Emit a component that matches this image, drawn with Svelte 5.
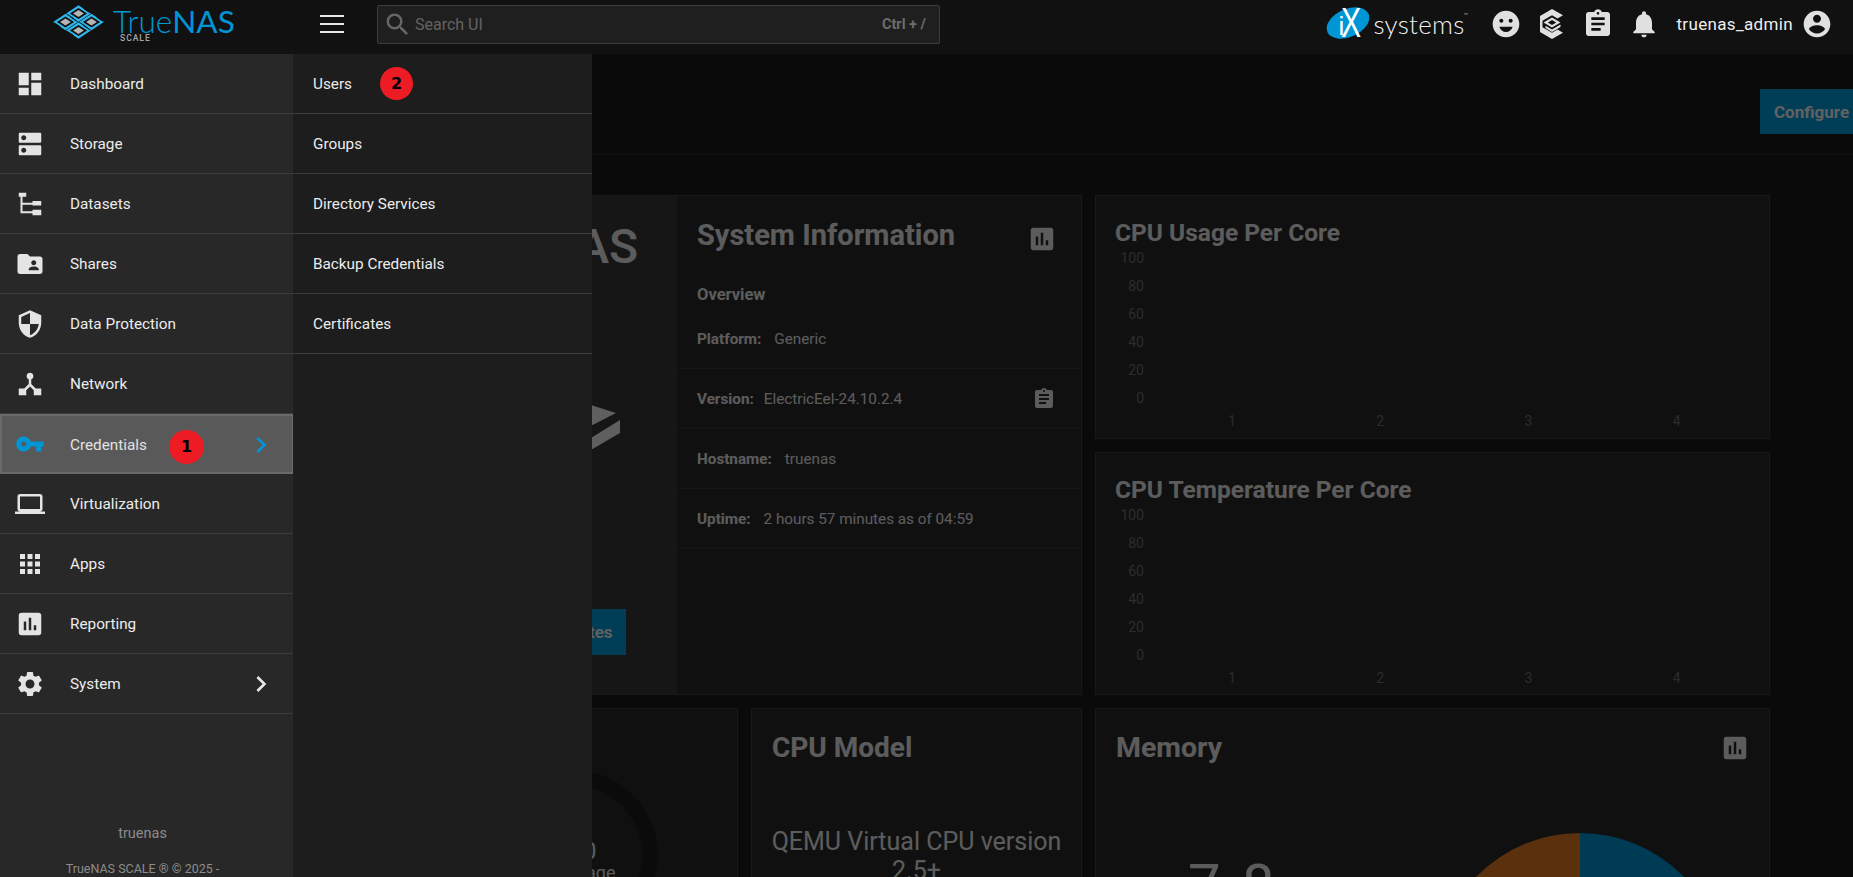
<script>
  const icons = {
    dashboard: 'M3 13h8V3H3v10zm0 8h8v-6H3v6zm10 0h8V11h-8v10zm0-18v6h8V3h-8z',
    storage: 'M20 13H4c-.55 0-1 .45-1 1v6c0 .55.45 1 1 1h16c.55 0 1-.45 1-1v-6c0-.55-.45-1-1-1zM7 19c-1.1 0-2-.9-2-2s.9-2 2-2 2 .9 2 2-.9 2-2 2zM20 3H4c-.55 0-1 .45-1 1v6c0 .55.45 1 1 1h16c.55 0 1-.45 1-1V4c0-.55-.45-1-1-1zM7 9c-1.1 0-2-.9-2-2s.9-2 2-2 2 .9 2 2-.9 2-2 2z',
    datasets: 'M3 3h6v3.2H6V11h8V9.6h7v3.6h-7V12.6H6v5.2h8v-1.2h7V21h-7v-1.6H4.4V6.2H3z',
    shares: 'M20 6h-8l-2-2H4c-1.1 0-1.99.9-1.99 2L2 18c0 1.1.9 2 2 2h16c1.1 0 2-.9 2-2V8c0-1.1-.9-2-2-2zm-5 3c1.1 0 2 .9 2 2s-.9 2-2 2-2-.9-2-2 .9-2 2-2zm4 8h-8v-1c0-1.33 2.67-2 4-2s4 .67 4 2v1z',
    shield: 'M12 1L3 5v6c0 5.55 3.84 10.74 9 12 5.16-1.26 9-6.45 9-12V5l-9-4zm0 10.99h7c-.53 4.12-3.28 7.79-7 8.94V12H5V6.3l7-3.11v8.8z',
    network: 'M12 3a2.7 2.7 0 0 1 1 5.2V12l3.6 3.6H21V21h-6v-4l-3-3-3 3v4H3v-5.4h4.4L11 12V8.2A2.7 2.7 0 0 1 12 3z',
    key: 'M12.65 10C11.83 7.67 9.61 6 7 6c-3.31 0-6 2.69-6 6s2.69 6 6 6c2.61 0 4.83-1.67 5.65-4H17v4h4v-4h2v-4H12.65zM7 14c-1.1 0-2-.9-2-2s.9-2 2-2 2 .9 2 2-.9 2-2 2z',
    laptop: 'M20 18c1.1 0 1.99-.9 1.99-2L22 6c0-1.1-.9-2-2-2H4c-1.1 0-2 .9-2 2v10c0 1.1.9 2 2 2H0v2h24v-2h-4zM4 6h16v10H4V6z',
    apps: 'M4 8h4V4H4v4zm6 12h4v-4h-4v4zm-6 0h4v-4H4v4zm0-6h4v-4H4v4zm6 0h4v-4h-4v4zm6-10v4h4V4h-4zm-6 4h4V4h-4v4zm6 6h4v-4h-4v4zm0 6h4v-4h-4v4z',
    assessment: 'M19 3H5c-1.1 0-2 .9-2 2v14c0 1.1.9 2 2 2h14c1.1 0 2-.9 2-2V5c0-1.1-.9-2-2-2zM9 17H7v-7h2v7zm4 0h-2V7h2v10zm4 0h-2v-4h2v4z',
    settings: 'M19.14 12.94c.04-.3.06-.61.06-.94 0-.32-.02-.64-.07-.94l2.03-1.58c.18-.14.23-.41.12-.61l-1.92-3.32c-.12-.22-.37-.29-.59-.22l-2.39.96c-.5-.38-1.03-.7-1.62-.94l-.36-2.54c-.04-.24-.24-.41-.48-.41h-3.84c-.24 0-.43.17-.47.41l-.36 2.54c-.59.24-1.13.57-1.62.94l-2.39-.96c-.22-.08-.47 0-.59.22L2.74 8.87c-.12.21-.08.47.12.61l2.03 1.58c-.05.3-.09.63-.09.94s.02.64.07.94l-2.03 1.58c-.18.14-.23.41-.12.61l1.92 3.32c.12.22.37.29.59.22l2.39-.96c.5.38 1.03.7 1.62.94l.36 2.54c.05.24.24.41.48.41h3.84c.24 0 .44-.17.47-.41l.36-2.54c.59-.24 1.13-.56 1.62-.94l2.39.96c.22.08.47 0 .59-.22l1.92-3.32c.12-.22.07-.47-.12-.61l-2.01-1.58zM12 15.6c-1.98 0-3.6-1.62-3.6-3.6s1.62-3.6 3.6-3.6 3.6 1.62 3.6 3.6-1.62 3.6-3.6 3.6z',
    chevron: 'M10 6L8.59 7.41 13.17 12l-4.58 4.59L10 18l6-6z',
    mood: 'M11.99 2C6.47 2 2 6.48 2 12s4.47 10 9.99 10C17.52 22 22 17.52 22 12S17.52 2 11.99 2zM8.5 8c.83 0 1.5.67 1.5 1.5S9.33 11 8.5 11 7 10.33 7 9.5 7.67 8 8.5 8zM12 18c-2.28 0-4.22-1.66-5-4h10c-.78 2.34-2.72 4-5 4zm3.5-7c-.83 0-1.5-.67-1.5-1.5S14.67 8 15.5 8s1.5.67 1.5 1.5-.67 1.5-1.5 1.5z',
    assignment: 'M19 3h-4.18C14.4 1.84 13.3 1 12 1c-1.3 0-2.4.84-2.82 2H5c-1.1 0-2 .9-2 2v14c0 1.1.9 2 2 2h14c1.1 0 2-.9 2-2V5c0-1.1-.9-2-2-2zm-7 0c.55 0 1 .45 1 1s-.45 1-1 1-1-.45-1-1 .45-1 1-1zm2 14H7v-2h7v2zm3-4H7v-2h10v2zm0-4H7V7h10v2z',
    bell: 'M12 22c1.1 0 2-.9 2-2h-4c0 1.1.89 2 2 2zm6-6v-5c0-3.07-1.64-5.64-4.5-6.32V4c0-.83-.67-1.5-1.5-1.5s-1.5.67-1.5 1.5v.68C7.63 5.36 6 7.92 6 11v5l-2 2v1h16v-1l-2-2z',
    account: 'M12 2C6.48 2 2 6.48 2 12s4.48 10 10 10 10-4.48 10-10S17.52 2 12 2zm0 3c1.66 0 3 1.34 3 3s-1.34 3-3 3-3-1.34-3-3 1.34-3 3-3zm0 14.2c-2.5 0-4.71-1.28-6-3.22.03-1.99 4-3.08 6-3.08 1.99 0 5.97 1.09 6 3.08-1.29 1.94-3.5 3.22-6 3.22z',
    search: 'M15.5 14h-.79l-.28-.27C15.41 12.59 16 11.11 16 9.5 16 5.91 13.09 3 9.5 3S3 5.91 3 9.5 5.91 16 9.5 16c1.61 0 3.09-.59 4.23-1.57l.27.28v.79l5 4.99L20.49 19l-4.99-5zm-6 0C7.01 14 5 11.99 5 9.5S7.01 5 9.5 5 14 7.01 14 9.5 11.99 14 9.5 14z',
  };

  const menu = [
    { label: 'Dashboard', icon: 'dashboard' },
    { label: 'Storage', icon: 'storage' },
    { label: 'Datasets', icon: 'datasets' },
    { label: 'Shares', icon: 'shares' },
    { label: 'Data Protection', icon: 'shield' },
    { label: 'Network', icon: 'network' },
    { label: 'Credentials', icon: 'key', active: true, arrow: true, badge: '1' },
    { label: 'Virtualization', icon: 'laptop' },
    { label: 'Apps', icon: 'apps' },
    { label: 'Reporting', icon: 'assessment' },
    { label: 'System', icon: 'settings', arrow: true },
  ];
  const submenu = ['Users', 'Groups', 'Directory Services', 'Backup Credentials', 'Certificates'];

  const info = [
    { k: 'Platform:', v: 'Generic' },
    { k: 'Version:', v: 'ElectricEel-24.10.2.4', copy: true },
    { k: 'Hostname:', v: 'truenas' },
    { k: 'Uptime:', v: '2 hours 57 minutes as of 04:59' },
  ];

  const charts = ['CPU Usage Per Core', 'CPU Temperature Per Core'];
  const ticks = [100, 80, 60, 40, 20, 0];
  const cores = [1, 2, 3, 4];

  // isometric cells of the TrueNAS mark
  const cells = [[78.5, 13.5], [65.5, 22], [91.5, 22], [78.5, 30.5]];
  const dia = (c, a, b) => `${c[0]},${c[1] - b} ${c[0] + a},${c[1]} ${c[0]},${c[1] + b} ${c[0] - a},${c[1]}`;
</script>

<div class="shell">
  <header class="topbar">
    <div class="brand">
      <svg class="mark" viewBox="50 2 56 40" aria-hidden="true">
        {#each cells as c}
          <polygon points={dia(c, 12.4, 8.2)} fill="#2fb6ea" />
          <polygon points={dia(c, 8.6, 5.6)} fill="#111" />
          <polygon points={dia(c, 5.4, 3.5)} fill="#b5b5b5" />
          <line x1={c[0] - 11} y1={c[1] + 1} x2={c[0] - 5} y2={c[1] + 5} stroke="#111" stroke-width="1" />
          <line x1={c[0] + 11} y1={c[1] - 1} x2={c[0] + 5} y2={c[1] - 5} stroke="#111" stroke-width="1" />
        {/each}
      </svg>
      <div class="word">
        <span class="tn"><span class="true">True</span><span class="nas">NAS</span></span>
        <span class="scale">SCALE</span>
      </div>
    </div>
    <button class="burger" aria-label="Menu"><i></i><i></i><i></i></button>
    <div class="search">
      <svg class="search-ic" viewBox="2.5 2.5 18 18"><path d={icons.search} /></svg>
      <span class="ph">Search UI</span>
      <span class="kbd">Ctrl + /</span>
    </div>
    <div class="right">
      <div class="ix">
        <svg class="ix-oval" viewBox="0 0 44 32" aria-hidden="true">
          <ellipse cx="21" cy="16" rx="22.5" ry="14" transform="rotate(-24 21 16)" fill="#0095d5" />
        </svg>
        <span class="ix-i">i</span><span class="ix-x">X</span>
        <span class="ix-s">systems</span><span class="tm">™</span>
      </div>
      <svg class="tool" viewBox="0 0 24 24"><path d={icons.mood} /></svg>
      <svg class="tool tc" viewBox="0 0 26 30" aria-hidden="true">
        <path fill-rule="evenodd" d="M13 0l11 6.2-5.5 3.3L13 6.3 3.5 11.8v6.4L13 23.7l5.5-3.2 5.5 3.2L13 30 1 23V7z" />
        <path fill-rule="evenodd" d="M13 8.5l8.5 5L13 18.6 4.5 13.5zM13 11l-4.2 2.5L13 16l4.2-2.5z" />
        <path d="M21.5 15.5v2.4L13 23l-6.5-3.9v-2.3L13 20.6z" />
      </svg>
      <svg class="tool" viewBox="0 0 24 24"><path d={icons.assignment} /></svg>
      <svg class="tool" viewBox="0 0 24 24"><path d={icons.bell} /></svg>
      <span class="user">truenas_admin</span>
      <svg class="tool acc" viewBox="0 0 24 24"><path d={icons.account} /></svg>
    </div>
  </header>

  <div class="stage">
    <main class="page">
      <div class="page-head">
        <button class="configure">Configure</button>
      </div>
      <div class="dash">
        <div class="col">
          <section class="card sys">
            <div class="sys-left">
              <div class="sys-name">TrueNAS</div>
              <svg class="sys-logo" viewBox="0 0 240 50" aria-hidden="true">
                <polygon points="128,0 150,0 194,14 170.5,26 150,16 128,14" />
                <polygon points="198,21 198,34 170.5,50 120,50 120,38 170.5,38" />
              </svg>
              <button class="updates">Check for Updates</button>
            </div>
            <div class="sys-right">
              <div class="sys-head">
                <h2>System Information</h2>
                <svg class="ic-muted" viewBox="0 0 24 24"><path d={icons.assessment} /></svg>
              </div>
              <div class="overview">Overview</div>
              {#each info as row}
                <div class="row">
                  <b class:tight={row.copy}>{row.k}</b><span>{row.v}</span>
                  {#if row.copy}
                    <svg class="ic-copy" viewBox="0 0 24 24"><path d={icons.assignment} /></svg>
                  {/if}
                </div>
              {/each}
            </div>
          </section>
          <div class="pair">
            <section class="card cpu">
              <svg class="gauge" viewBox="0 0 332 180" aria-hidden="true">
                <circle cx="166" cy="146" r="77" fill="none" stroke="#000" stroke-opacity=".3" stroke-width="16" />
                <text x="166" y="129" text-anchor="middle" class="g-a">0.5 %</text>
                <text x="166" y="150" text-anchor="middle" class="g-b">0.50</text>
                <text x="166" y="170" text-anchor="middle" class="g-c">Avg Usage</text>
              </svg>
            </section>
            <section class="card model">
              <h2>CPU Model</h2>
              <p>QEMU Virtual CPU version 2.5+</p>
            </section>
          </div>
        </div>
        <div class="col">
          {#each charts as title}
            <section class="card chart">
              <h3>{title}</h3>
              <svg class="plot" viewBox="0 0 675 190" aria-hidden="true">
                {#each ticks as t, i}
                  <line x1="62" x2="655" y1={6 + i * 28} y2={6 + i * 28} class="grid" />
                  <text x="48" y={11 + i * 28} text-anchor="end" class="tick">{t}</text>
                {/each}
                {#each [0, 1, 2, 3, 4] as n}
                  <line x1={62 + n * 148.25} x2={62 + n * 148.25} y1="6" y2="155" class="grid" />
                {/each}
                {#each cores as c, i}
                  <text x={136 + i * 148.2} y="174" text-anchor="middle" class="tick">{c}</text>
                {/each}
              </svg>
            </section>
          {/each}
          <section class="card memory">
            <div class="sys-head">
              <h2>Memory</h2>
              <svg class="ic-muted" viewBox="0 0 24 24"><path d={icons.assessment} /></svg>
            </div>
            <div class="mem-num">7.8</div>
            <svg class="pie" viewBox="0 0 290 290" aria-hidden="true">
              <path d="M145 145V0A145 145 0 0 1 290 145z" fill="#0095d5" />
              <path d="M145 145V0A145 145 0 0 0 0 145z" fill="#e07a1f" />
            </svg>
          </section>
        </div>
      </div>
    </main>

    <div class="backdrop"></div>

    <nav class="nav">
      <div class="side">
        <ul>
          {#each menu as m}
            <li class:active={m.active}>
              <svg class="ni" viewBox="0 0 24 24"><path d={icons[m.icon]} /></svg>
              <span>{m.label}</span>
              {#if m.badge}<em class="badge one">{m.badge}</em>{/if}
              {#if m.arrow}
                <svg class="arrow" viewBox="0 0 24 24"><path d={icons.chevron} /></svg>
              {/if}
            </li>
          {/each}
        </ul>
        <footer>
          <div class="host">truenas</div>
          <div class="copy">TrueNAS SCALE ® © 2025 -<br />iXsystems, Inc</div>
        </footer>
      </div>
      <div class="sub">
        <ul>
          {#each submenu as s, i}
            <li>
              <span>{s}</span>
              {#if i === 0}<em class="badge two">2</em>{/if}
            </li>
          {/each}
        </ul>
      </div>
    </nav>
  </div>
</div>

<style>
  :global(body) { margin: 0; background: #1a1a1a; }
  * { box-sizing: border-box; }
  .shell {
    width: 1853px; height: 877px; overflow: hidden;
    display: flex; flex-direction: column;
    font-family: Roboto, "Liberation Sans", sans-serif;
    color: #e6e6e6;
  }
  button { font-family: inherit; border: 0; }

  /* top bar */
  .topbar {
    height: 54px; flex: none; background: #111; padding-bottom: 6px;
    display: flex; align-items: center; position: relative; z-index: 3;
  }
  .brand { width: 320px; flex: none; display: flex; align-items: center; height: 54px; padding-left: 50px; align-self: flex-start; }
  .mark { width: 56px; height: 40px; flex: none; margin-top: -10px; }
  .word { position: relative; margin-left: 7px; height: 54px; width: 130px; }
  .tn { position: absolute; left: 0; top: 8px; font-family: Lato, sans-serif; font-size: 31.5px; line-height: 26px; color: #0095d5; white-space: nowrap; }
  .true { font-weight: 300; }
  .nas { font-weight: 400; }
  .scale { position: absolute; left: 7px; top: 34px; font-size: 8.5px; line-height: 9px; letter-spacing: 1px; color: #a8a8a8; font-weight: 500; }
  .burger { width: 24px; height: 18px; padding: 0; background: none; display: flex; flex-direction: column; justify-content: space-between; flex: none; }
  .burger i { display: block; height: 2.4px; background: #e8e8e8; }
  .search {
    margin-left: 33px; width: 563px; height: 39px; flex: none;
    background: #1f1f1f; border: 1px solid #3c3c3c; border-radius: 2px;
    display: flex; align-items: center; padding: 0 13px 0 8px;
  }
  .search-ic { width: 22px; height: 22px; fill: #666; flex: none; }
  .ph { margin-left: 7px; font-size: 16px; color: #636363; }
  .kbd { margin-left: auto; font-size: 14.5px; font-weight: 700; color: #6c6c6c; }
  .right { margin-left: auto; display: flex; align-items: center; padding-right: 20px; }
  .ix { position: relative; width: 150px; height: 40px; flex: none; }
  .ix-oval { position: absolute; left: 0; top: 3px; width: 44px; height: 32px; overflow: visible; }
  .ix-i { position: absolute; left: 11px; top: 8px; color: #fff; font: 400 26px/28px "Liberation Sans", sans-serif; }
  .ix-x { position: absolute; left: 14px; top: -2px; color: #fff; font: 400 42px/42px "Liberation Sans", sans-serif; transform: scaleX(.72); transform-origin: left; }
  .ix-s { position: absolute; left: 46px; top: 4px; color: #f0f0f0; font: 300 26px/32px Lato, sans-serif; letter-spacing: .3px; }
  .tm { position: absolute; left: 136px; top: 8px; font-size: 7px; color: #bbb; }
  .tool { width: 32px; height: 32px; fill: #e0e0e0; flex: none; margin-left: 14px; }
  .ix + .tool { margin-left: 13px; }
  .tc { width: 26px; height: 30px; margin-left: 17px; margin-right: 3px; }
  .user { margin-left: 16px; font-size: 17px; letter-spacing: .35px; color: #eee; white-space: nowrap; }
  .acc { margin-left: 8px; }

  /* page underneath */
  .stage { position: relative; flex: 1; min-height: 0; overflow: hidden; }
  .page { height: 100%; background: #1a1a1a; }
  .page-head { height: 101px; border-bottom: 1px solid #2c2c2c; display: flex; justify-content: flex-end; padding-top: 35px; }
  .configure {
    width: 93px; height: 45px; background: #0098d8; color: #f2f2f2;
    font-size: 17px; font-weight: 700; text-align: left; padding: 0 0 0 14px; flex: none; white-space: nowrap;
  }
  .dash { display: grid; grid-template-columns: 676px 675px; column-gap: 13px; padding: 40px 0 0 406px; align-items: start; }
  .col { display: flex; flex-direction: column; gap: 13px; }
  .card { background: #2a2a2a; border: 1px solid #404040; }
  .sys { height: 500px; display: flex; }
  .sys-left { width: 270px; flex: none; background: #383838; display: flex; flex-direction: column; align-items: center; padding-top: 21px; }
  .sys-name { font-size: 48px; line-height: 60px; color: #e6e6e6; font-weight: 500; }
  .sys-logo { width: 240px; height: 50px; margin-top: 122px; fill: #eee; flex: none; }
  .updates { margin-top: 160px; width: 167px; height: 46px; background: #0098d8; color: #eee; font-size: 17px; font-weight: 700; padding: 0; white-space: nowrap; flex: none; }
  .sys-right { flex: 1; display: flex; flex-direction: column; }
  .sys-head { display: flex; justify-content: space-between; padding: 19px 24px 0 20px; height: 60px; }
  h2 { margin: 0; font-size: 29px; line-height: 40px; font-weight: 700; color: #e6e6e6; white-space: nowrap; }
  .ic-muted { width: 30px; height: 30px; fill: #e6e6e6; margin-top: 9px; flex: none; }
  .overview { padding: 27px 20px 0; font-size: 16.5px; line-height: 24px; font-weight: 700; height: 53px; }
  .row { height: 60px; flex: none; border-bottom: 1px solid #383838; padding: 1px 20px 0; display: flex; align-items: center; font-size: 15.25px; color: #e6e6e6; }
  .row b { margin-right: 13px; font-weight: 700; }
  .row b.tight { margin-right: 10px; }
  .ic-copy { width: 24px; height: 24px; fill: #e6e6e6; margin-left: auto; margin-right: 5px; }
  .pair { display: grid; grid-template-columns: 332px 331px; column-gap: 13px; }
  .pair .card, .memory { height: 260px; position: relative; overflow: hidden; }
  .gauge { position: absolute; left: 0; top: 0; width: 332px; height: 180px; }
  .g-a { font-size: 16px; fill: #e6e6e6; }
  .g-b { font-size: 24px; fill: #e6e6e6; }
  .g-c { font-size: 18px; fill: #e6e6e6; }
  .model { padding: 19px 20px; }
  .model h2 { font-size: 28px; }
  .model p { margin: 59px -10px 0; font-size: 25px; line-height: 29px; text-align: center; color: #e6e6e6; }
  .memory .sys-head { padding: 19px 19px 0 20px; }
  .memory .sys-head h2 { font-size: 28.5px; }
  .memory .ic-muted { margin-top: 5px; }
  .mem-num { position: absolute; left: 92px; top: 146px; font-size: 58px; line-height: 60px; letter-spacing: 3px; font-weight: 400; color: #e6e6e6; }
  .pie { position: absolute; left: 339px; top: 124px; width: 290px; height: 290px; }
  .chart { height: 243.5px; position: relative; }
  .chart h3 { margin: 0; padding: 21px 19px 0; font-size: 24.5px; line-height: 32px; font-weight: 700; color: #e6e6e6; white-space: nowrap; }
  .plot { display: block; position: absolute; left: 0; top: 56px; width: 675px; height: 190px; }
  .grid { stroke: #2e2e2e; stroke-width: 1; }
  .tick { font-size: 14px; fill: #6e6e6e; }

  .backdrop { position: absolute; inset: 0; background: rgba(0, 0, 0, .6); }

  /* side navigation, over the page */
  .nav { position: absolute; left: 0; top: 0; bottom: 0; width: 592px; display: flex; z-index: 2; }
  .side { width: 293px; flex: none; background: #282828; display: flex; flex-direction: column; }
  .sub { flex: 1; background: #1d1d1d; }
  ul { list-style: none; margin: 0; padding: 0; }
  li { height: 60px; flex: none; border-bottom: 1px solid #3c3c3c; display: flex; align-items: center; font-size: 15.3px; font-weight: 400; color: #ececec; position: relative; white-space: nowrap; }
  li span { padding-top: 1px; }
  .side li { padding-left: 70px; }
  .sub li { padding-left: 20px; }
  .ni { position: absolute; left: 15px; top: 15px; width: 30px; height: 30px; fill: #e4e4e4; }
  .arrow { position: absolute; left: 245px; top: 14px; width: 32px; height: 32px; fill: #e8e8e8; }
  li.active { background: #595959; border: 2px solid #6a6a6a; border-right-width: 1px; padding-left: 68px; color: #e2e2e2; }
  li.active .ni { left: 13px; top: 13px; fill: #0095d5; }
  li.active .arrow { left: 243px; top: 13px; fill: #0095d5; }
  .badge {
    position: absolute; background: #ed1c24; color: #000; border-radius: 50%;
    font: 700 16px/33px "DejaVu Sans", sans-serif; text-align: center;
  }
  .one { left: 167px; top: 14px; width: 35px; height: 34px; }
  .two { left: 87px; top: 13px; width: 33px; height: 33px; }
  footer { margin-top: 110px; padding-right: 8px; text-align: center; color: #8c8c8c; }
  .host { font-size: 14.5px; line-height: 20px; }
  .copy { margin-top: 15px; font-size: 12.5px; line-height: 20px; }
</style>
